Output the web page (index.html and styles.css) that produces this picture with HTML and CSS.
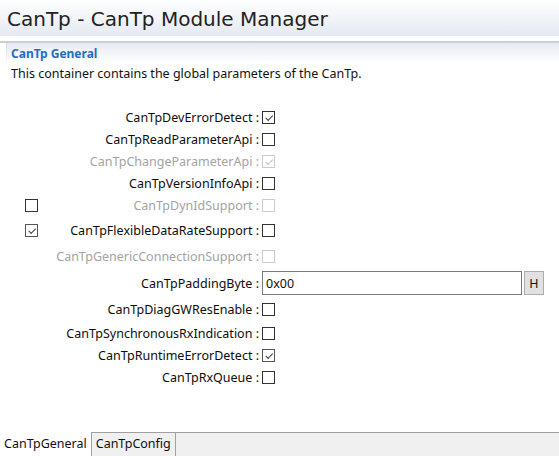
FILE: index.html
```html
<!DOCTYPE html>
<html>
<head>
<meta charset="utf-8">
<link rel="stylesheet" href="styles.css">
</head>
<body>
<div class="page">
  <div class="title-bar"><h1 class="title">CanTp - CanTp Module Manager</h1></div>
  <div class="title-sep"></div>
  <div class="section">
    <div class="section-head">CanTp General</div>
    <p class="desc">This container contains the global parameters of the CanTp.</p>
    <div class="form">
      <span class="side"></span><span class="lbl">CanTpDevErrorDetect :</span><span class="ctl"><span class="cb checked"></span></span>
      <span class="side"></span><span class="lbl">CanTpReadParameterApi :</span><span class="ctl"><span class="cb"></span></span>
      <span class="side"></span><span class="lbl dis">CanTpChangeParameterApi :</span><span class="ctl"><span class="cb checked dis"></span></span>
      <span class="side"></span><span class="lbl">CanTpVersionInfoApi :</span><span class="ctl"><span class="cb"></span></span>
      <span class="side"><span class="cb"></span></span><span class="lbl dis">CanTpDynIdSupport :</span><span class="ctl"><span class="cb dis"></span></span>
      <span class="side"><span class="cb checked soft"></span></span><span class="lbl">CanTpFlexibleDataRateSupport :</span><span class="ctl"><span class="cb"></span></span>
      <span class="side"></span><span class="lbl dis">CanTpGenericConnectionSupport :</span><span class="ctl"><span class="cb dis"></span></span>
      <span class="side"></span><span class="lbl">CanTpPaddingByte :</span><span class="ctl"><span class="field">0x00</span><span class="hbtn">H</span></span>
      <span class="side"></span><span class="lbl">CanTpDiagGWResEnable :</span><span class="ctl"><span class="cb"></span></span>
      <span class="side"></span><span class="lbl">CanTpSynchronousRxIndication :</span><span class="ctl"><span class="cb"></span></span>
      <span class="side"></span><span class="lbl">CanTpRuntimeErrorDetect :</span><span class="ctl"><span class="cb checked soft"></span></span>
      <span class="side"></span><span class="lbl">CanTpRxQueue :</span><span class="ctl"><span class="cb"></span></span>
    </div>
  </div>
  <div class="tabs">
    <span class="tab active">CanTpGeneral</span><span class="tab">CanTpConfig</span>
  </div>
</div>
</body>
</html>
```

FILE: styles.css
```css
html, body {
  margin: 0;
  padding: 0;
  background: #ffffff;
}
.page {
  width: 559px;
  height: 456px;
  display: flex;
  flex-direction: column;
  font-family: "Noto Sans", "Open Sans", sans-serif;
  color: #1b1b1b;
  overflow: hidden;
}
.title-bar {
  height: 36px;
  background: linear-gradient(#ffffff, #e4e9f1);
  display: flex;
  align-items: center;
  padding-left: 7px;
  padding-top: 1px;
  box-sizing: border-box;
}
.title {
  margin: 0;
  font-family: "DejaVu Sans", sans-serif;
  font-weight: normal;
  font-size: 20px;
  color: #222;
}
.title-sep {
  height: 7px;
  border-top: 1px solid #ffffff;
  border-bottom: 2px solid #c9d0d8;
  background: #ffffff;
  box-sizing: border-box;
}
.section {
  flex: 1;
  margin-left: 6px;
  background: linear-gradient(#e6e9f3 0px, #ffffff 20px);
  position: relative;
}
.section::before {
  content: "";
  position: absolute;
  left: 0;
  top: 0;
  width: 1px;
  height: 22px;
  background: linear-gradient(#d4d9e2, #ffffff);
}
.section-head {
  font-size: 12px;
  font-weight: bold;
  color: #1d6fc5;
  padding: 3px 0 0 5px;
  height: 16px;
  line-height: 16px;
}
.desc {
  margin: 4px 0 0 5px;
  font-size: 12.5px;
  line-height: 16px;
  color: #111;
}
.form {
  margin-top: 24px;
  margin-left: 19px;
  display: grid;
  grid-template-columns: 13px 223px auto;
  grid-template-rows: 22px 22px 22px 22px 22px 28px 25px 28px 25px 22px 22px 22px;
  align-items: center;
  font-size: 12.5px;
}
.side {
  display: flex;
  align-items: center;
}
.lbl {
  text-align: right;
  padding-right: 2px;
  white-space: nowrap;
  color: #0d0d0d;
}
.lbl.dis {
  color: #a3a3a3;
}
.ctl {
  display: flex;
  align-items: center;
  padding-left: 1px;
}
.cb {
  width: 11px;
  height: 11px;
  border: 1px solid #333333;
  background: #fff;
  position: relative;
  display: inline-block;
}
.cb.dis {
  border-color: #cccccc;
}
.cb.checked::after {
  content: "";
  position: absolute;
  left: 2px;
  top: 1px;
  width: 6px;
  height: 3px;
  border-left: 1.5px solid #444;
  border-bottom: 1.5px solid #444;
  transform: rotate(-45deg) translate(-1px, 2px);
}
.cb.checked.dis::after {
  border-color: #c4c4c4;
}
.cb.soft {
  border-color: #555;
}
.field {
  width: 255px;
  height: 22px;
  border: 1px solid #7a7a7a;
  display: inline-flex;
  align-items: center;
  padding-left: 3px;
  font-size: 12.5px;
  color: #111;
  background: #fff;
}
.hbtn {
  margin-left: 2px;
  width: 18px;
  height: 22px;
  border: 1px solid #adadad;
  background: #e1e1e1;
  display: inline-flex;
  align-items: center;
  justify-content: center;
  font-size: 12.5px;
  color: #111;
}
.tabs {
  height: 23px;
  background: #f0f0f0;
  border-top: 1px solid #a0a0a0;
  display: flex;
  font-size: 12.5px;
}
.tab {
  padding: 0 4px 0 4px;
  height: 23px;
  line-height: 22px;
  border-right: 1px solid #a0a0a0;
  color: #111;
}
.tab.active {
  background: #ffffff;
  margin-top: -1px;
  height: 24px;
  line-height: 24px;
}
```
